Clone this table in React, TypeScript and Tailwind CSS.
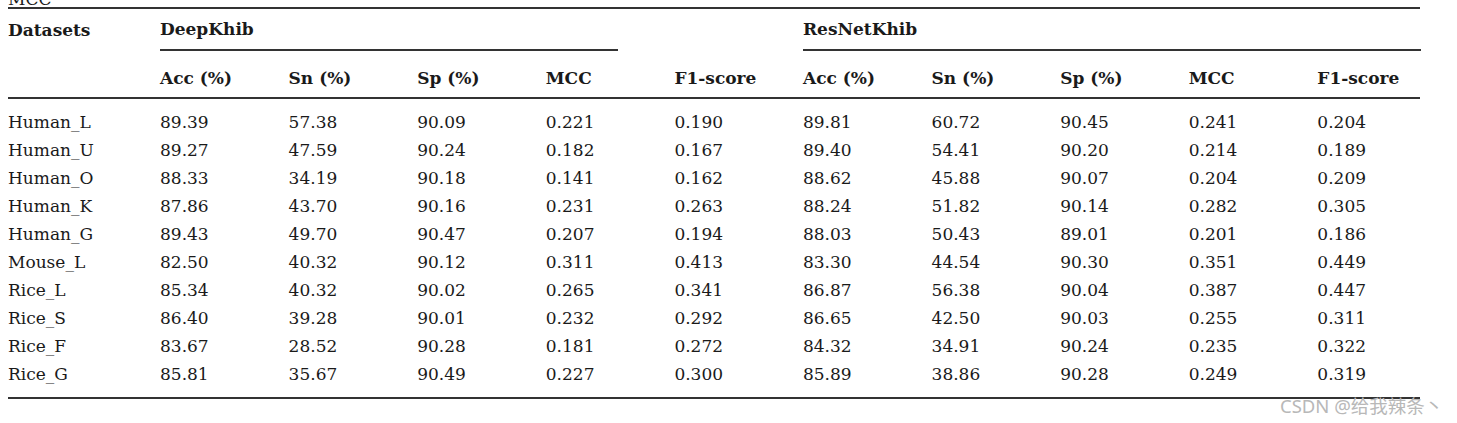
const deepRows = [
  ["Human_L", "89.39", "57.38", "90.09", "0.221", "0.190", "89.81", "60.72", "90.45", "0.241", "0.204"],
  ["Human_U", "89.27", "47.59", "90.24", "0.182", "0.167", "89.40", "54.41", "90.20", "0.214", "0.189"],
  ["Human_O", "88.33", "34.19", "90.18", "0.141", "0.162", "88.62", "45.88", "90.07", "0.204", "0.209"],
  ["Human_K", "87.86", "43.70", "90.16", "0.231", "0.263", "88.24", "51.82", "90.14", "0.282", "0.305"],
  ["Human_G", "89.43", "49.70", "90.47", "0.207", "0.194", "88.03", "50.43", "89.01", "0.201", "0.186"],
  ["Mouse_L", "82.50", "40.32", "90.12", "0.311", "0.413", "83.30", "44.54", "90.30", "0.351", "0.449"],
  ["Rice_L", "85.34", "40.32", "90.02", "0.265", "0.341", "86.87", "56.38", "90.04", "0.387", "0.447"],
  ["Rice_S", "86.40", "39.28", "90.01", "0.232", "0.292", "86.65", "42.50", "90.03", "0.255", "0.311"],
  ["Rice_F", "83.67", "28.52", "90.28", "0.181", "0.272", "84.32", "34.91", "90.24", "0.235", "0.322"],
  ["Rice_G", "85.81", "35.67", "90.49", "0.227", "0.300", "85.89", "38.86", "90.28", "0.249", "0.319"],
]

const subHeads = ["Acc (%)", "Sn (%)", "Sp (%)", "MCC", "F1-score", "Acc (%)", "Sn (%)", "Sp (%)", "MCC", "F1-score"]

const cols = "grid grid-cols-[152px_repeat(10,128.6px)]"

export default function App() {
  return (
    <div className="relative w-[1457px] h-[423px] bg-white text-[#1a1a1a] font-['DejaVu_Serif',serif] text-[17px] overflow-hidden">
      {/* caption cut off at the top */}
      <div className="h-[7px] overflow-hidden flex items-end pl-[8px]">
        <div className="leading-[17px] -mb-[1px]">MCC</div>
      </div>

      <div className="ml-[8px] w-[1412px] border-t-2 border-[#333]">
        {/* group header */}
        <div className={cols + " h-[42px] items-center font-bold"}>
          <div className="pt-[2px]">Datasets</div>
          <div className="col-span-4 h-full flex flex-col">
            <div className="flex-1 flex items-center pt-[2px]">DeepKhib</div>
            <div className="w-[458px] border-b-2 border-[#333]" />
          </div>
          <div />
          <div className="col-span-4 h-full flex flex-col">
            <div className="flex-1 flex items-center pt-[2px]">ResNetKhib</div>
            <div className="w-[618px] border-b-2 border-[#333]" />
          </div>
        </div>

        {/* column headers */}
        <div className={cols + " h-[48px] pt-[9px] items-center font-bold border-b-2 border-[#333]"}>
          <div />
          {subHeads.map((h, i) => (
            <div key={i}>{h}</div>
          ))}
        </div>

        {/* data */}
        <div className="pt-[9px] pb-[9px] border-b-2 border-[#333]">
          {deepRows.map((row) => (
            <div key={row[0]} className={cols + " h-[28px] leading-[28px]"}>
              {row.map((cell, i) => (
                <div key={i}>{cell}</div>
              ))}
            </div>
          ))}
        </div>
      </div>

      <div className="absolute left-[1280px] top-[395px] text-[18.5px] leading-[22px] text-[#b8b8b8] font-['Noto_Sans','Noto_Sans_CJK_SC',sans-serif]">
        CSDN @给我辣条丶
      </div>
    </div>
  )
}
